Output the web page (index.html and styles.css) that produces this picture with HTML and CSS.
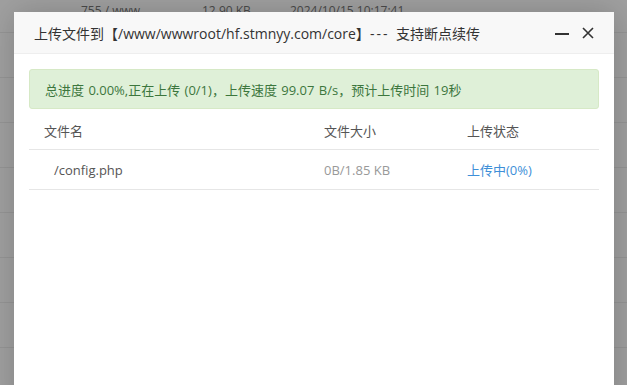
FILE: index.html
```html
<!DOCTYPE html>
<html lang="zh">
<head>
<meta charset="utf-8">
<link rel="stylesheet" href="styles.css">
</head>
<body>
<div class="backdrop">
  <div class="bg-row"><span class="c1">755 / www</span><span class="c2">12.90 KB</span><span class="c3">2024/10/15 10:17:41</span></div>
  <div class="bg-row"></div>
  <div class="bg-row"></div>
  <div class="bg-row"></div>
  <div class="bg-row"></div>
  <div class="bg-row"></div>
  <div class="bg-row"></div>
  <div class="bg-row"></div>
  <div class="bg-row"></div>
</div>
<div class="dialog">
  <div class="dlg-head">
    <span class="dlg-title">上传文件到【/www/wwwroot/hf.stmnyy.com/core】<span class="dash">---</span> 支持断点续传</span>
    <span class="dlg-btns">
      <span class="btn-min"></span>
      <svg class="btn-close" width="12" height="12" viewBox="0 0 12 12"><path d="M1 1L11 11M11 1L1 11" stroke="#333" stroke-width="1.6" fill="none"/></svg>
    </span>
  </div>
  <div class="dlg-body">
    <div class="alert">总进度 0.00%,正在上传 (0/1)，上传速度 99.07 B/s，预计上传时间 19秒</div>
    <div class="tbl">
      <div class="tr th"><span class="col-name">文件名</span><span class="col-size">文件大小</span><span class="col-state">上传状态</span></div>
      <div class="tr td"><span class="col-name file">/config.php</span><span class="col-size size">0B/1.85 KB</span><span class="col-state state">上传中(0%)</span></div>
    </div>
  </div>
</div>
</body>
</html>
```
FILE: styles.css
```css
html, body {
  margin: 0;
  padding: 0;
  width: 627px;
  height: 385px;
  overflow: hidden;
  font-family: "Open Sans", "Noto Sans CJK SC", sans-serif;
}
body { background: #a0a0a0; position: relative; }
.backdrop { margin-top: -12px; }
.bg-row {
  height: 44px;
  border-bottom: 1px solid #959595;
  display: flex;
  align-items: center;
  font-size: 12px;
  color: #4a4a4a;
}
.bg-row .c1 { margin-left: 81px; width: 121px; }
.bg-row .c2 { width: 88px; }
.dialog {
  position: absolute;
  left: 14px;
  top: 12px;
  width: 600px;
  height: 400px;
  background: #fff;
  box-shadow: 1px 1px 30px rgba(0,0,0,0.2);
}
.dlg-head {
  height: 41px;
  background: #f8f8f8;
  border-bottom: 1px solid #eee;
  display: flex;
  align-items: center;
  padding-left: 20px;
  padding-right: 20px;
  color: #333;
  font-size: 14px;
}
.dlg-title { flex: 1; white-space: nowrap; }
.dash { letter-spacing: 2px; padding-right: 3px; }
.dlg-btns { display: flex; align-items: center; gap: 12px; }
.btn-min { width: 14px; height: 2px; background: #333; display: block; margin-top: 2px; }
.btn-close { display: block; margin-left: 1px; }
.dlg-body { padding: 15px 15px 0 15px; }
.alert {
  height: 38px;
  background: #dff0d8;
  border: 1px solid #d6e9c6;
  border-radius: 3px;
  color: #3c763d;
  font-size: 13px;
  display: flex;
  align-items: center;
  padding-left: 15px;
  word-spacing: 1px;
}
.tbl { margin-top: 3px; }
.tr {
  display: flex;
  align-items: center;
  border-bottom: 1px solid #e6e6e6;
  font-size: 13px;
}
.th { height: 37px; color: #555; }
.td { height: 39px; }
.col-name { width: 280px; padding-left: 15px; }
.col-size { width: 143px; }
.file { padding-left: 25px; width: 270px; color: #555; }
.size { color: #999; }
.state { color: #3e8fd8; }
```
